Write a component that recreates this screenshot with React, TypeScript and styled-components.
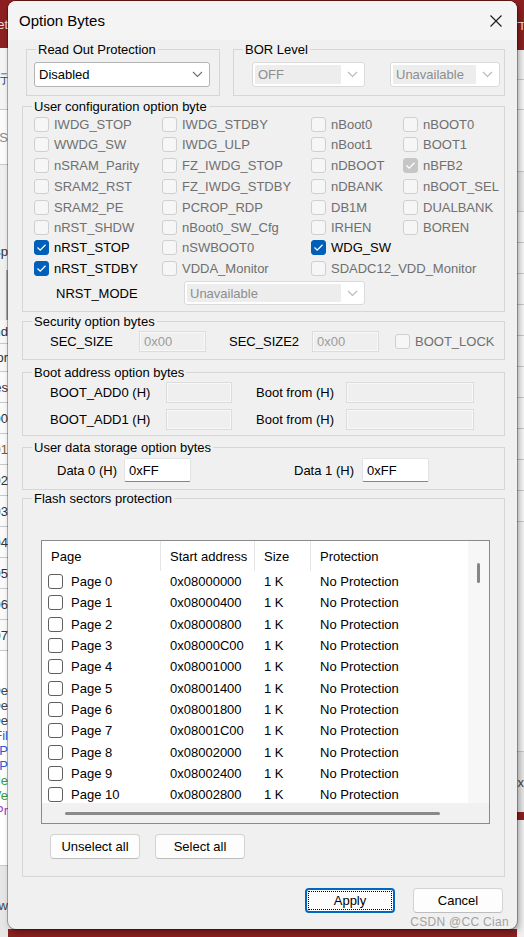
import React from "react";
import styled, { createGlobalStyle, css } from "styled-components";

const FONT = `"Liberation Sans", Arial, sans-serif`;

const GlobalStyle = createGlobalStyle`
  html, body { margin: 0; padding: 0; }
  body { width: 524px; height: 937px; overflow: hidden; background: #efefef; font-family: ${FONT}; }
`;

/* ---------- backdrop (the application behind the dialog) ---------- */

const Screen = styled.div`
  position: relative;
  width: 524px;
  height: 937px;
  overflow: hidden;
`;

const Backdrop = styled.div`
  display: flex;
  height: 100%;
`;

const Strip = styled.div<{ $w: number }>`
  width: ${(p) => p.$w}px;
  flex: none;
  display: flex;
  flex-direction: column;
  overflow: hidden;
`;

const Middle = styled.div`
  flex: 1;
  display: flex;
  flex-direction: column;
`;

const Cell = styled.div<{ $h: number; $bg: string; $color?: string; $line?: boolean; $edge?: boolean }>`
  height: ${(p) => p.$h}px;
  flex: none;
  box-sizing: border-box;
  background: ${(p) => p.$bg};
  color: ${(p) => p.$color ?? "#333"};
  display: flex;
  align-items: center;
  justify-content: flex-end;
  overflow: hidden;
  white-space: nowrap;
  font: 13px/15px ${FONT};
  ${(p) => p.$line && css`border-bottom: 1px solid #c9c9c9;`}
  ${(p) => p.$edge && css`border-right: 2px solid #a8a8a8;`}
`;

const MiddleFill = styled.div`
  flex: 1;
  background: #ececec;
`;

type BgCell = { h: number; bg: string; t?: string; c?: string; line?: boolean; edge?: boolean };

const leftCells: BgCell[] = [
  { h: 48, bg: "#8c2020", t: "et", c: "#f3dede" },
  { h: 62, bg: "#f4f4f4", t: "行", c: "#234a7a", line: true },
  { h: 55, bg: "#fbfbfb", t: "S", c: "#8a8a8a", line: true },
  { h: 67, bg: "#f0f0f0" },
  { h: 38, bg: "#f0f0f0", t: "sp", c: "#333" },
  { h: 50, bg: "#f0f0f0", edge: true },
  { h: 24, bg: "#f7f7f7", t: "nd", c: "#333", line: true },
  { h: 28, bg: "#f7f7f7", t: "or", c: "#333", line: true },
  { h: 31, bg: "#fafafa", t: "es", c: "#333", line: true },
  { h: 31, bg: "#fafafa", t: "00", c: "#333", line: true },
  { h: 31, bg: "#fafafa", t: "01", c: "#8a5a10", line: true },
  { h: 31, bg: "#fafafa", t: "02", c: "#333", line: true },
  { h: 31, bg: "#fafafa", t: "03", c: "#333", line: true },
  { h: 31, bg: "#fafafa", t: "04", c: "#333", line: true },
  { h: 31, bg: "#fafafa", t: "05", c: "#333", line: true },
  { h: 31, bg: "#fafafa", t: "06", c: "#333", line: true },
  { h: 31, bg: "#fafafa", t: "07", c: "#333", line: true },
  { h: 32, bg: "#ffffff" },
  { h: 15, bg: "#ffffff", t: "De", c: "#444" },
  { h: 15, bg: "#ffffff", t: "De", c: "#444" },
  { h: 15, bg: "#ffffff", t: "De", c: "#444" },
  { h: 15, bg: "#ffffff", t: "Fil", c: "#2d5bd6" },
  { h: 15, bg: "#ffffff", t: "P", c: "#2d5bd6" },
  { h: 15, bg: "#ffffff", t: "P", c: "#2d5bd6" },
  { h: 15, bg: "#ffffff", t: "Me", c: "#3c9a3c" },
  { h: 15, bg: "#ffffff", t: "Ve", c: "#3c9a3c" },
  { h: 15, bg: "#ffffff", t: "Pr", c: "#9b3cc8" },
  { h: 48, bg: "#ffffff", line: true },
  { h: 79, bg: "#e6e6e6", t: "w", c: "#444" },
  { h: 8, bg: "#8c2020" },
];

const rightCells: BgCell[] = [
  { h: 50, bg: "#8c2020", t: "ד", c: "#f3dede" },
  { h: 30, bg: "#f2f2f2", line: true },
  { h: 30, bg: "#f7f7f7", line: true },
  { h: 62, bg: "#f7f7f7", line: true },
  { h: 40, bg: "#ececec", line: true },
  { h: 31, bg: "#f7f7f7", line: true },
  { h: 31, bg: "#f7f7f7", line: true },
  { h: 31, bg: "#f7f7f7", line: true },
  { h: 31, bg: "#f7f7f7", line: true },
  { h: 31, bg: "#f7f7f7", line: true },
  { h: 31, bg: "#f7f7f7", line: true },
  { h: 31, bg: "#f7f7f7", line: true },
  { h: 31, bg: "#f7f7f7", line: true },
  { h: 31, bg: "#f7f7f7", line: true },
  { h: 31, bg: "#f7f7f7", line: true },
  { h: 230, bg: "#f3f3f3", line: true },
  { h: 60, bg: "#e6e6e6", t: "x", c: "#444" },
  { h: 8, bg: "#8c2020" },
];

/* ---------- dialog window ---------- */

const Dialog = styled.div`
  position: absolute;
  left: 8px;
  top: 1px;
  width: 509px;
  height: 928px;
  box-sizing: border-box;
  background: #f0f0f0;
  border-radius: 8px;
  overflow: hidden;
  box-shadow: 0 0 0 1px rgba(0, 0, 0, 0.28), 2px 3px 6px rgba(0, 0, 0, 0.35);
  display: flex;
  flex-direction: column;
  font: 13px/15px ${FONT};
  color: #000;
`;

const TitleBar = styled.div`
  height: 39px;
  flex: none;
  background: #f4f4f4;
  display: flex;
  align-items: center;
  justify-content: space-between;
  padding-left: 11px;
`;

const Title = styled.span`
  font: 15px/18px ${FONT};
  color: #000;
`;

const CloseBtn = styled.div`
  width: 42px;
  height: 39px;
  display: flex;
  align-items: center;
  justify-content: center;
`;

const Body = styled.div`
  flex: 1;
  padding: 2px 12px 0 14px;
  display: flex;
  flex-direction: column;
`;

const TopRow = styled.div`
  display: flex;
  gap: 13px;
  padding-left: 4px;
`;

const Group = styled.fieldset<{ $h: number; $w?: number; $mt?: number; $grow?: boolean }>`
  margin: ${(p) => p.$mt ?? 0}px 0 0 0;
  padding: 0;
  min-width: 0;
  box-sizing: border-box;
  height: ${(p) => p.$h}px;
  flex: ${(p) => (p.$grow ? "1 1 0" : "none")};
  ${(p) => p.$w && css`width: ${p.$w}px;`}
  border: 1px solid #d6d6d6;
  border-radius: 0;
`;

const Legend = styled.legend`
  margin-left: 9px;
  padding: 0 2px;
  font: 13px/15px ${FONT};
  color: #000;
`;

const GroupRow = styled.div<{ $pt: number; $pl: number; $gap?: number }>`
  display: flex;
  align-items: center;
  padding: ${(p) => p.$pt}px 0 0 ${(p) => p.$pl}px;
  gap: ${(p) => p.$gap ?? 0}px;
`;

/* ---------- combo boxes ---------- */

const Combo = styled.div<{ $w: number; $h: number; $disabled?: boolean }>`
  width: ${(p) => p.$w}px;
  height: ${(p) => p.$h}px;
  flex: none;
  box-sizing: border-box;
  border: 1px solid ${(p) => (p.$disabled ? "#dadada" : "#b4b4b4")};
  border-radius: 3px;
  background: #fff;
  display: flex;
  padding: 2px 0 2px 2px;
`;

const ComboText = styled.span<{ $disabled?: boolean }>`
  flex: 1;
  display: flex;
  align-items: center;
  padding-left: ${(p) => (p.$disabled ? 3 : 2)}px;
  background: ${(p) => (p.$disabled ? "#ededed" : "transparent")};
  color: ${(p) => (p.$disabled ? "#8e8e8e" : "#000")};
  white-space: nowrap;
`;

const ComboArrow = styled.span`
  width: 23px;
  flex: none;
  display: flex;
  align-items: center;
  justify-content: center;
`;

function Select({ w, h, value, disabled }: { w: number; h: number; value: string; disabled?: boolean }) {
  return (
    <Combo $w={w} $h={h} $disabled={disabled}>
      <ComboText $disabled={disabled}>{value}</ComboText>
      <ComboArrow>
        <svg width="11" height="7" viewBox="0 0 11 7">
          <polyline points="1,1 5.5,5.5 10,1" fill="none" stroke={disabled ? "#b8b8b8" : "#707070"} strokeWidth="1.1" />
        </svg>
      </ComboArrow>
    </Combo>
  );
}

/* ---------- check boxes ---------- */

type BoxState = "off" | "on" | "grey" | "list";

const Box = styled.span<{ $s: BoxState }>`
  width: 15px;
  height: 15px;
  flex: none;
  box-sizing: border-box;
  border-radius: 3px;
  display: inline-flex;
  align-items: center;
  justify-content: center;
  ${(p) =>
    p.$s === "on"
      ? css`background: #005fb8; border: 1px solid #005fb8;`
      : p.$s === "grey"
      ? css`background: #c6c6c6; border: 1px solid #c6c6c6;`
      : p.$s === "list"
      ? css`background: #fff; border: 1px solid #5f5f5f;`
      : css`background: #f6f6f6; border: 1px solid #cfcfcf;`}
`;

function CheckBox({ s }: { s: BoxState }) {
  return (
    <Box $s={s}>
      {(s === "on" || s === "grey") && (
        <svg width="11" height="9" viewBox="0 0 11 9">
          <polyline points="1.5,4.5 4.2,7.2 9.5,1.8" fill="none" stroke="#fff" strokeWidth="1.3" />
        </svg>
      )}
    </Box>
  );
}

const CheckItem = styled.div<{ $enabled?: boolean; $span?: number; $ml?: number }>`
  display: flex;
  align-items: center;
  gap: 5px;
  white-space: nowrap;
  color: ${(p) => (p.$enabled ? "#000" : "#6f6f6f")};
  ${(p) => p.$span && css`grid-column: span ${p.$span};`}
  ${(p) => p.$ml && css`margin-left: ${p.$ml}px;`}
`;

const ConfigGrid = styled.div`
  display: grid;
  grid-template-columns: 128px 149px 92px 1fr;
  grid-template-rows: 20px 21px 20px 22px 20px 20px 21px 21px 28px;
  padding-left: 11px;
`;

const NrstRow = styled.div`
  grid-column: 1 / -1;
  display: flex;
  align-items: center;
`;

const NrstLabel = styled.span`
  width: 150px;
  box-sizing: border-box;
  padding-left: 22px;
  color: #000;
`;

/* ---------- edit fields ---------- */

const Label = styled.span<{ $w: number; $ml?: number }>`
  width: ${(p) => p.$w}px;
  flex: none;
  white-space: nowrap;
  color: #000;
  ${(p) => p.$ml && css`margin-left: ${p.$ml}px;`}
`;

const Edit = styled.div<{ $w: number; $h: number; $editable?: boolean }>`
  width: ${(p) => p.$w}px;
  height: ${(p) => p.$h}px;
  flex: none;
  box-sizing: border-box;
  display: flex;
  align-items: center;
  padding-left: 4px;
  ${(p) =>
    p.$editable
      ? css`
          background: #fff;
          border: 1px solid #e3e3e3;
          border-bottom: 1px solid #868686;
          border-radius: 2px;
          color: #000;
        `
      : css`
          background: #efefef;
          border: 1px solid #dcdcdc;
          box-shadow: inset 0 0 0 1px #f8f8f8;
          color: #9c9c9c;
        `}
`;

const BootGrid = styled.div`
  display: grid;
  grid-template-columns: 116px 66px 24px 90px 128px;
  grid-template-rows: 22px 22px;
  row-gap: 5px;
  align-items: center;
  padding: 1px 0 0 27px;
`;

const Spacer = styled.span``;

/* ---------- list view ---------- */

const ListView = styled.div`
  width: 449px;
  height: 284px;
  box-sizing: border-box;
  border: 1px solid #8a8a8a;
  background: #fff;
  display: grid;
  grid-template-columns: 1fr 21px;
  grid-template-rows: 1fr 20px;
`;

const ListMain = styled.div`
  overflow: hidden;
  display: flex;
  flex-direction: column;
`;

const Columns = styled.div<{ $h: number }>`
  display: grid;
  grid-template-columns: 119px 94px 56px 1fr;
  height: ${(p) => p.$h}px;
  flex: none;
  align-items: center;
`;

const HeadCell = styled.div<{ $sep?: boolean }>`
  height: 100%;
  box-sizing: border-box;
  display: flex;
  align-items: center;
  padding-left: 9px;
  ${(p) => p.$sep && css`border-right: 1px solid #e5e5e5;`}
`;

const RowCell = styled.div<{ $first?: boolean }>`
  display: flex;
  align-items: center;
  gap: 8px;
  padding-left: ${(p) => (p.$first ? 6 : 9)}px;
  white-space: nowrap;
`;

const VTrack = styled.div`
  background: #f7f7f7;
  display: flex;
  justify-content: center;
  padding-top: 22px;
`;

const VThumb = styled.div`
  width: 3px;
  height: 20px;
  border-radius: 2px;
  background: #858585;
`;

const HTrack = styled.div`
  background: #f1f1f1;
  display: flex;
  align-items: center;
  padding-left: 23px;
`;

const HThumb = styled.div`
  width: 375px;
  height: 3px;
  border-radius: 2px;
  background: #8a8a8a;
`;

const Corner = styled.div`
  background: #f1f1f1;
`;

/* ---------- buttons ---------- */

const ButtonRow = styled.div<{ $pl?: number; $pt?: number; $gap: number; $end?: boolean }>`
  display: flex;
  gap: ${(p) => p.$gap}px;
  padding: ${(p) => p.$pt ?? 0}px ${(p) => (p.$end ? 2 : 0)}px 0 ${(p) => p.$pl ?? 0}px;
  justify-content: ${(p) => (p.$end ? "flex-end" : "flex-start")};
`;

const Button = styled.button<{ $focused?: boolean }>`
  width: 90px;
  height: 25px;
  box-sizing: border-box;
  padding: 0;
  border-radius: 4px;
  background: #fdfdfd;
  border: 1px solid #d3d3d3;
  border-bottom-color: #bdbdbd;
  font: 13px/15px ${FONT};
  color: #000;
  ${(p) =>
    p.$focused &&
    css`
      border: 2px solid #0067c0;
      outline: 1px dotted #000;
      outline-offset: -4px;
    `}
`;

const Watermark = styled.span`
  position: absolute;
  right: 8px;
  bottom: 0;
  font: 12px/14px ${FONT};
  letter-spacing: 0.3px;
  color: #a3a3a3;
`;

/* ---------- data ---------- */

type Opt = { t: string; s?: BoxState; span?: number } | null;

const configRows: Opt[][] = [
  [{ t: "IWDG_STOP" }, { t: "IWDG_STDBY" }, { t: "nBoot0" }, { t: "nBOOT0" }],
  [{ t: "WWDG_SW" }, { t: "IWDG_ULP" }, { t: "nBoot1" }, { t: "BOOT1" }],
  [{ t: "nSRAM_Parity" }, { t: "FZ_IWDG_STOP" }, { t: "nDBOOT" }, { t: "nBFB2", s: "grey" }],
  [{ t: "SRAM2_RST" }, { t: "FZ_IWDG_STDBY" }, { t: "nDBANK" }, { t: "nBOOT_SEL" }],
  [{ t: "SRAM2_PE" }, { t: "PCROP_RDP" }, { t: "DB1M" }, { t: "DUALBANK" }],
  [{ t: "nRST_SHDW" }, { t: "nBoot0_SW_Cfg" }, { t: "IRHEN" }, { t: "BOREN" }],
  [{ t: "nRST_STOP", s: "on" }, { t: "nSWBOOT0" }, { t: "WDG_SW", s: "on" }, null],
  [{ t: "nRST_STDBY", s: "on" }, { t: "VDDA_Monitor" }, { t: "SDADC12_VDD_Monitor", span: 2 }],
];

const pages = Array.from({ length: 11 }, (_, i) => ({
  name: `Page ${i}`,
  addr: "0x" + (0x08000000 + i * 0x400).toString(16).toUpperCase().padStart(8, "0"),
}));

function Strips({ cells }: { cells: BgCell[] }) {
  return (
    <>
      {cells.map((c, i) => (
        <Cell key={i} $h={c.h} $bg={c.bg} $color={c.c} $line={c.line} $edge={c.edge}>
          {c.t}
        </Cell>
      ))}
    </>
  );
}

export default function App() {
  return (
    <Screen>
      <GlobalStyle />
      <Backdrop>
        <Strip $w={8}>
          <Strips cells={leftCells} />
        </Strip>
        <Middle>
          <Cell $h={48} $bg="#8c2020" />
          <MiddleFill />
          <Cell $h={8} $bg="#8c2020" />
        </Middle>
        <Strip $w={7}>
          <Strips cells={rightCells} />
        </Strip>
      </Backdrop>

      <Dialog>
        <TitleBar>
          <Title>Option Bytes</Title>
          <CloseBtn>
            <svg width="12" height="12" viewBox="0 0 12 12">
              <path d="M0.5 0.5 L11.5 11.5 M11.5 0.5 L0.5 11.5" stroke="#1a1a1a" strokeWidth="1.1" />
            </svg>
          </CloseBtn>
        </TitleBar>

        <Body>
          <TopRow>
            <Group $h={54} $w={194}>
              <Legend>Read Out Protection</Legend>
              <GroupRow $pt={5} $pl={7}>
                <Select w={176} h={25} value="Disabled" />
              </GroupRow>
            </Group>
            <Group $h={54} $grow>
              <Legend>BOR Level</Legend>
              <GroupRow $pt={5} $pl={18} $gap={25}>
                <Select w={113} h={25} value="OFF" disabled />
                <Select w={110} h={25} value="Unavailable" disabled />
              </GroupRow>
            </Group>
          </TopRow>

          <Group $h={213} $mt={3}>
            <Legend>User configuration option byte</Legend>
            <ConfigGrid>
              {configRows.flat().map((o, i) =>
                o ? (
                  <CheckItem key={i} $enabled={o.s === "on"} $span={o.span}>
                    <CheckBox s={o.s ?? "off"} />
                    {o.t}
                  </CheckItem>
                ) : (
                  <Spacer key={i} />
                )
              )}
              <NrstRow>
                <NrstLabel>NRST_MODE</NrstLabel>
                <Select w={181} h={24} value="Unavailable" disabled />
              </NrstRow>
            </ConfigGrid>
          </Group>

          <Group $h={46} $mt={2}>
            <Legend>Security option bytes</Legend>
            <GroupRow $pt={2} $pl={27}>
              <Label $w={89}>SEC_SIZE</Label>
              <Edit $w={67} $h={21}>0x00</Edit>
              <Label $w={83} $ml={23}>
                SEC_SIZE2
              </Label>
              <Edit $w={67} $h={21}>0x00</Edit>
              <CheckItem $ml={16}>
                <CheckBox s="off" />
                BOOT_LOCK
              </CheckItem>
            </GroupRow>
          </Group>

          <Group $h={71} $mt={5}>
            <Legend>Boot address option bytes</Legend>
            <BootGrid>
              <Label $w={116}>BOOT_ADD0 (H)</Label>
              <Edit $w={66} $h={21} />
              <Spacer />
              <Label $w={90}>Boot from (H)</Label>
              <Edit $w={128} $h={21} />
              <Label $w={116}>BOOT_ADD1 (H)</Label>
              <Edit $w={66} $h={21} />
              <Spacer />
              <Label $w={90}>Boot from (H)</Label>
              <Edit $w={128} $h={21} />
            </BootGrid>
          </Group>

          <Group $h={50} $mt={4}>
            <Legend>User data storage option bytes</Legend>
            <GroupRow $pt={3} $pl={34}>
              <Label $w={67}>Data 0 (H)</Label>
              <Edit $w={67} $h={24} $editable>
                0xFF
              </Edit>
              <Label $w={68} $ml={103}>
                Data 1 (H)
              </Label>
              <Edit $w={67} $h={24} $editable>
                0xFF
              </Edit>
            </GroupRow>
          </Group>

          <Group $h={386} $mt={1}>
            <Legend>Flash sectors protection</Legend>
            <GroupRow $pt={34} $pl={18}>
              <ListView>
                <ListMain>
                  <Columns $h={30}>
                    <HeadCell $sep>Page</HeadCell>
                    <HeadCell $sep>Start address</HeadCell>
                    <HeadCell $sep>Size</HeadCell>
                    <HeadCell>Protection</HeadCell>
                  </Columns>
                  {pages.map((p) => (
                    <Columns key={p.name} $h={21.3}>
                      <RowCell $first>
                        <CheckBox s="list" />
                        {p.name}
                      </RowCell>
                      <RowCell>{p.addr}</RowCell>
                      <RowCell>1 K</RowCell>
                      <RowCell>No Protection</RowCell>
                    </Columns>
                  ))}
                </ListMain>
                <VTrack>
                  <VThumb />
                </VTrack>
                <HTrack>
                  <HThumb />
                </HTrack>
                <Corner />
              </ListView>
            </GroupRow>
            <ButtonRow $pl={27} $pt={10} $gap={15}>
              <Button>Unselect all</Button>
              <Button>Select all</Button>
            </ButtonRow>
          </Group>

          <ButtonRow $pt={11} $gap={18} $end>
            <Button $focused>Apply</Button>
            <Button>Cancel</Button>
          </ButtonRow>
        </Body>
        <Watermark>CSDN @CC Cian</Watermark>
      </Dialog>
    </Screen>
  );
}
